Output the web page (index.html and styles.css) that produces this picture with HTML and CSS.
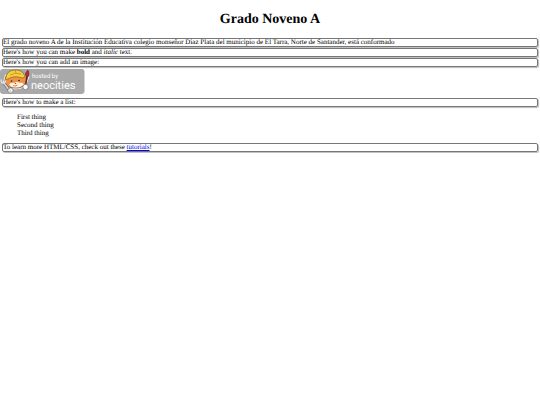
FILE: index.html
```html
<!DOCTYPE html>
<html lang="es">
<head>
    <meta charset="UTF-8">
    <meta name="viewport" content="width=device-width, initial-scale=1.0">
    <title>Grado Noveno A</title>
    <link rel="stylesheet" href="styles.css">
</head>
<body>
    <h1>Grado Noveno A</h1>

    <p>El grado noveno A de la Institución Educativa colegio monseñor Diaz Plata del municipio de El Tarra, Norte de Santander, está conformado</p>

    <p>Here's how you can make <strong>bold</strong> and <em>italic</em> text.</p>

    <p>Here's how you can add an image:</p>
    <svg class="site-button" viewBox="0 0 85 26" role="img" aria-label="hosted by neocities">
        <rect x="0" y="1" width="84.500" height="25" rx="3" fill="#a9a9a9"/>
        <!-- cat -->
        <path d="M6 8 L4.500 14 Q7 20 14 20 Q24 21 26 14 L28 9.500 L23 8 Z" fill="#ef9246" stroke="#fff" stroke-width="2.400"/>
        <path d="M6 8 L4.500 14 Q7 20 14 20 Q24 21 26 14 L28 9.500 L23 8 Z" fill="#ef9246" stroke="#6b3a20" stroke-width=".6"/>
        <path d="M9 16.500 Q11 14 14 15 Q17 13 20 15 Q23 14 24 16.500 Q20 20 15 19.500 Q11 19.500 9 16.500Z" fill="#fff3e3"/>
        <!-- helmet -->
        <path d="M6 9 Q7 3 14 2 Q22 1 25 8 Q25 10 22 10 Q14 7 8 11 Q4 12 6 9Z" fill="#f5cf3e" stroke="#85601a" stroke-width=".7"/>
        <path d="M10 7 Q15 4 21 6 M15 2 L16 5" fill="none" stroke="#a67b20" stroke-width=".6"/>
        <circle cx="11.500" cy="13" r=".8" fill="#332018"/>
        <circle cx="19" cy="12.500" r=".8" fill="#332018"/>
        <path d="M14.500 15h2l-1 1.200z" fill="#8a3a28"/>
        <path d="M13 17.500 Q15 19 17.500 17" fill="none" stroke="#8a3a28" stroke-width=".6"/>
        <!-- wrench -->
        <path d="M3.500 14.500 L10 23" stroke="#55595d" stroke-width="2.600"/>
        <path d="M3.500 14.500 L10 23" stroke="#e0e3e6" stroke-width="1.400"/>
        <path d="M1.200 11.500 Q.7 14.500 3 15 Q5.500 15 5.500 12.500" fill="none" stroke="#e0e3e6" stroke-width="1.400"/>
        <circle cx="10.500" cy="22.500" r="2.600" fill="#fff" stroke="#555" stroke-width=".6"/>
        <path d="M9 22 L11 22.500 M9.500 23.500 L11.500 23.500" stroke="#777" stroke-width=".4"/>
        <!-- brush -->
        <path d="M27 8 L25.500 18" stroke="#5b2b20" stroke-width="1.600"/>
        <path d="M25.500 7.500 Q25 4 28 2 Q30 6 28 9Z" fill="#b52e35" stroke="#57282a" stroke-width=".5"/>
        <circle cx="25.500" cy="19" r="2.700" fill="#fff" stroke="#555" stroke-width=".6"/>
        <text class="hosted" x="32" y="10">hosted by</text>
        <text class="brand" x="31" y="21">neocities</text>
    </svg>

    <p>Here's how to make a list:</p>
    <ul>
        <li>First thing</li>
        <li>Second thing</li>
        <li>Third thing</li>
    </ul>

    <p>To learn more HTML/CSS, check out these <a href="tutorials.html">tutorials</a>!</p>
</body>
</html>
```
FILE: styles.css
```css
body {
    margin: 0;
    background: white;
    color: black;
    font-family: "Liberation Serif", "Times New Roman", serif;
    font-size: 7px;
    line-height: 8px;
    text-rendering: geometricPrecision;
}

h1 {
    margin: 12px 0 10px;
    font-size: 14px;
    line-height: 16px;
    text-align: center;
}

p {
    margin: 0 2px 1px;
    border: 1px solid #777;
    border-radius: 2px;
    box-shadow: 1px 1px 1px #bbb;
    line-height: 7px;
}

a {
    color: #0000ee;
}

.site-button {
    display: block;
    width: 85px;
    height: 26px;
    margin-bottom: 4px;
}

.site-button text {
    font-family: Roboto, sans-serif;
    fill: white;
}

.hosted {
    font-size: 6px;
}

.brand {
    font-size: 11px;
}

ul {
    margin: 6px 0;
    padding-left: 17px;
    list-style: none;
}
```
